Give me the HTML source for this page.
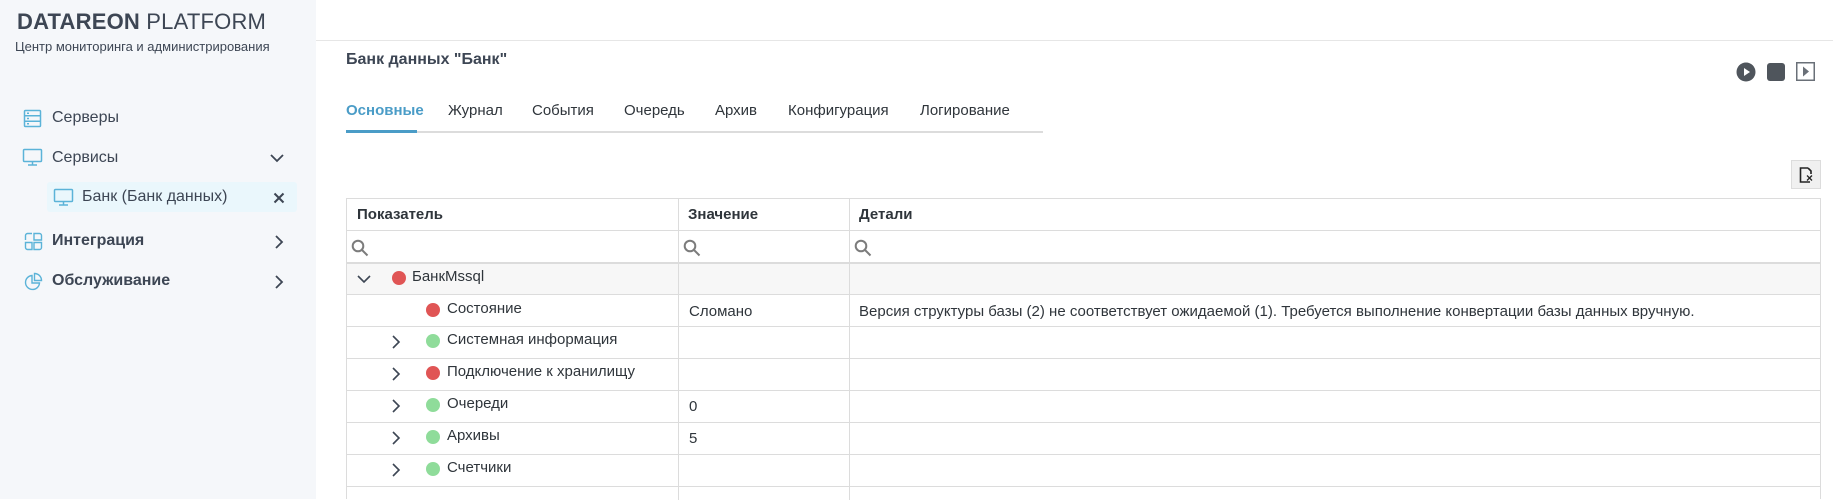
<!DOCTYPE html>
<html><head><meta charset="utf-8">
<style>
*{margin:0;padding:0;box-sizing:border-box}
body{width:1833px;height:499px;overflow:hidden;background:#fff;font-family:"Liberation Sans",sans-serif;color:#3a3f45;position:relative}
.side{position:absolute;left:0;top:0;width:316px;height:499px;background:#f5f7fa}
.abs{position:absolute;white-space:nowrap}
.logo{left:17px;top:9px;font-size:22px;color:#3d4654;letter-spacing:0.2px}
.logo b{font-weight:900}
.sub{left:15px;top:39px;font-size:13px;color:#3d4654}
.mi{font-size:16px;color:#3d4654;line-height:20px}
.sel{left:47px;top:182px;width:250px;height:30px;background:#eaf7fc;border-radius:3px}
.topline{position:absolute;left:316px;top:40px;width:1517px;height:1px;background:#e6e6e6}
.title{left:346px;top:51px;font-size:16px;font-weight:bold;color:#3d4654}
.tab{top:102px;font-size:15px;color:#2f353b}
.tabline{position:absolute;left:346px;top:131px;width:697px;height:2px;background:#dcdcdc}
.tabact{position:absolute;left:346px;top:130px;width:71px;height:3px;background:#4a9cc7}
.tbl{position:absolute;left:346px;top:198px;width:1475px;border:1px solid #dcdcdc;border-bottom:none;height:301px}
.row{position:absolute;left:0;width:1473px;border-bottom:1px solid #dcdcdc}
.vl{position:absolute;top:0;width:1px;height:301px;background:#dcdcdc}
.dot{position:absolute;width:14px;height:14px;border-radius:50%}
.r{background:#e05555}.g{background:#8fdc9a}
.t{position:absolute;font-size:15px;color:#2f353b;white-space:nowrap}
</style></head><body>
<div class="side"></div>
<div class="abs logo"><b>DATAREON</b> PLATFORM</div>
<div class="abs sub">Центр мониторинга и администрирования</div>

<svg class="abs" style="left:23px;top:109px" width="19" height="19" viewBox="0 0 19 19" fill="none" stroke="#5bb3d8" stroke-width="1.5"><rect x="1.5" y="1.5" width="16" height="16" rx="1"/><path d="M1.5 6.8h16M1.5 12.2h16M4 4.2h2M4 9.5h2M4 14.8h2"/></svg>
<div class="abs mi" style="left:52px;top:108px">Серверы</div>
<svg class="abs" style="left:22px;top:148px" width="21" height="19" viewBox="0 0 21 19" fill="none" stroke="#5bb3d8" stroke-width="1.5"><rect x="1.5" y="1.5" width="18" height="12" rx="1"/><path d="M10.5 13.5v3M6 17h9"/></svg>
<div class="abs mi" style="left:52px;top:148px">Сервисы</div>
<svg class="abs" style="left:270px;top:153px" width="14" height="10" viewBox="0 0 14 10" fill="none" stroke="#3d4654" stroke-width="1.8"><path d="M1 2l6 6 6-6"/></svg>
<div class="abs sel"></div>
<svg class="abs" style="left:53px;top:188px" width="21" height="19" viewBox="0 0 21 19" fill="none" stroke="#5bb3d8" stroke-width="1.5"><rect x="1.5" y="1.5" width="18" height="12" rx="1"/><path d="M10.5 13.5v3M6 17h9"/></svg>
<div class="abs mi" style="left:82px;top:187px">Банк (Банк данных)</div>
<svg class="abs" style="left:273px;top:192px" width="12" height="12" viewBox="0 0 12 12" stroke="#3d4654" stroke-width="2"><path d="M1.5 1.5l9 9M10.5 1.5l-9 9"/></svg>
<svg class="abs" style="left:24px;top:232px" width="19" height="19" viewBox="0 0 19 19" fill="none" stroke="#5bb3d8" stroke-width="1.4"><path d="M10 1.5h5.5a2 2 0 0 1 2 2V8H10zM1.5 10.5H8v7H3.5a2 2 0 0 1-2-2zM10 10.5h7.5v5a2 2 0 0 1-2 2H10zM1.5 8V3.5a2 2 0 0 1 2-2H8"/></svg>
<div class="abs mi" style="left:52px;top:231px;font-weight:bold">Интеграция</div>
<svg class="abs" style="left:274px;top:235px" width="10" height="14" viewBox="0 0 10 14" fill="none" stroke="#3d4654" stroke-width="1.8"><path d="M2 1l6 6-6 6"/></svg>
<svg class="abs" style="left:24px;top:272px" width="19" height="19" viewBox="0 0 19 19" fill="none" stroke="#5bb3d8" stroke-width="1.4"><path d="M8 3.5a7 7 0 1 0 7.5 7.5H8z"/><path d="M10.5 1.5a7 7 0 0 1 7 7h-7z"/></svg>
<div class="abs mi" style="left:52px;top:271px;font-weight:bold">Обслуживание</div>
<svg class="abs" style="left:274px;top:275px" width="10" height="14" viewBox="0 0 10 14" fill="none" stroke="#3d4654" stroke-width="1.8"><path d="M2 1l6 6-6 6"/></svg>

<div class="topline"></div>
<div class="abs title">Банк данных "Банк"</div>
<svg class="abs" style="left:1736px;top:62px" width="20" height="20" viewBox="0 0 20 20"><circle cx="10" cy="10" r="9.5" fill="#4f555c"/><path d="M8 6v8l6-4z" fill="#fff"/></svg>
<div class="abs" style="left:1767px;top:63px;width:18px;height:18px;background:#4f555c;border-radius:3px"></div>
<svg class="abs" style="left:1796px;top:62px" width="19" height="20" viewBox="0 0 19 20"><rect x="0.75" y="0.75" width="17.5" height="17.5" fill="none" stroke="#6a7078" stroke-width="1.5"/><path d="M7 4.5v10l6-5z" fill="#6a7078"/></svg>

<div class="abs tab" style="left:346px;color:#4a9cc7;font-weight:bold">Основные</div>
<div class="abs tab" style="left:448px">Журнал</div>
<div class="abs tab" style="left:532px">События</div>
<div class="abs tab" style="left:624px">Очередь</div>
<div class="abs tab" style="left:715px">Архив</div>
<div class="abs tab" style="left:788px">Конфигурация</div>
<div class="abs tab" style="left:920px">Логирование</div>
<div class="tabline"></div><div class="tabact"></div>

<div class="abs" style="left:1791px;top:160px;width:30px;height:29px;background:#f0f0f0;border:1px solid #dcdcdc"></div>
<svg class="abs" style="left:1799px;top:167px" width="15" height="16" viewBox="0 0 15 16" fill="none" stroke="#222" stroke-width="1.6"><path d="M9 1H1.5v14H11M9 1l3 3v3"/><path d="M8 8.5l5 5M13 8.5l-5 5" stroke-width="1.3"/></svg>

<div class="tbl">
<div class="row" style="top:0;height:32px"></div>
<div class="row" style="top:32px;height:33px;border-bottom:2px solid #dcdcdc"></div>
<div class="row" style="top:65px;height:31px;background:#f7f7f7"></div>
<div class="row" style="top:96px;height:32px"></div>
<div class="row" style="top:128px;height:32px"></div>
<div class="row" style="top:160px;height:32px"></div>
<div class="row" style="top:192px;height:32px"></div>
<div class="row" style="top:224px;height:32px"></div>
<div class="row" style="top:256px;height:32px"></div>
<div class="vl" style="left:331px"></div>
<div class="vl" style="left:502px"></div>
<div class="t" style="left:10px;top:7px;font-weight:bold">Показатель</div>
<div class="t" style="left:341px;top:7px;font-weight:bold">Значение</div>
<div class="t" style="left:512px;top:7px;font-weight:bold">Детали</div>
</div>
<svg class="abs" style="left:351px;top:239px" width="18" height="18" viewBox="0 0 18 18" fill="none" stroke="#7c7c7c" stroke-width="2"><circle cx="7" cy="7" r="5.3"/><path d="M11 11l5.5 5.5"/></svg>
<svg class="abs" style="left:683px;top:239px" width="18" height="18" viewBox="0 0 18 18" fill="none" stroke="#7c7c7c" stroke-width="2"><circle cx="7" cy="7" r="5.3"/><path d="M11 11l5.5 5.5"/></svg>
<svg class="abs" style="left:854px;top:239px" width="18" height="18" viewBox="0 0 18 18" fill="none" stroke="#7c7c7c" stroke-width="2"><circle cx="7" cy="7" r="5.3"/><path d="M11 11l5.5 5.5"/></svg>

<svg class="abs" style="left:357px;top:274px" width="14" height="10" viewBox="0 0 14 10" fill="none" stroke="#3d4654" stroke-width="1.6"><path d="M1 2l6 6 6-6"/></svg>
<div class="dot r" style="left:392px;top:271px"></div>
<div class="t" style="left:412px;top:268px">БанкMssql</div>

<div class="dot r" style="left:426px;top:303px"></div>
<div class="t" style="left:447px;top:300px">Состояние</div>
<div class="t" style="left:689px;top:303px">Сломано</div>
<div class="t" style="left:859px;top:303px">Версия структуры базы (2) не соответствует ожидаемой (1). Требуется выполнение конвертации базы данных вручную.</div>

<svg class="abs" style="left:391px;top:335px" width="10" height="14" viewBox="0 0 10 14" fill="none" stroke="#3d4654" stroke-width="1.6"><path d="M2 1l6 6-6 6"/></svg>
<div class="dot g" style="left:426px;top:334px"></div>
<div class="t" style="left:447px;top:331px">Системная информация</div>

<svg class="abs" style="left:391px;top:367px" width="10" height="14" viewBox="0 0 10 14" fill="none" stroke="#3d4654" stroke-width="1.6"><path d="M2 1l6 6-6 6"/></svg>
<div class="dot r" style="left:426px;top:366px"></div>
<div class="t" style="left:447px;top:363px">Подключение к хранилищу</div>

<svg class="abs" style="left:391px;top:399px" width="10" height="14" viewBox="0 0 10 14" fill="none" stroke="#3d4654" stroke-width="1.6"><path d="M2 1l6 6-6 6"/></svg>
<div class="dot g" style="left:426px;top:398px"></div>
<div class="t" style="left:447px;top:395px">Очереди</div>
<div class="t" style="left:689px;top:398px">0</div>

<svg class="abs" style="left:391px;top:431px" width="10" height="14" viewBox="0 0 10 14" fill="none" stroke="#3d4654" stroke-width="1.6"><path d="M2 1l6 6-6 6"/></svg>
<div class="dot g" style="left:426px;top:430px"></div>
<div class="t" style="left:447px;top:427px">Архивы</div>
<div class="t" style="left:689px;top:430px">5</div>

<svg class="abs" style="left:391px;top:463px" width="10" height="14" viewBox="0 0 10 14" fill="none" stroke="#3d4654" stroke-width="1.6"><path d="M2 1l6 6-6 6"/></svg>
<div class="dot g" style="left:426px;top:462px"></div>
<div class="t" style="left:447px;top:459px">Счетчики</div>
</body></html>
